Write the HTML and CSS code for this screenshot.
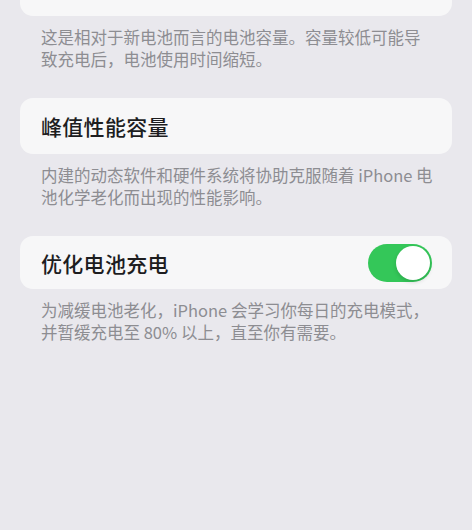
FILE: index.html
```html
<!DOCTYPE html>
<html lang="zh-CN">
<head>
<meta charset="utf-8">
<title>电池健康</title>
<link rel="stylesheet" href="styles.css">
</head>
<body>
<main class="settings">
  <section class="group group-first">
    <div class="cell">
      <span class="cell-title">最大容量</span>
      <span class="cell-value">100%</span>
    </div>
    <p class="footnote">这是相对于新电池而言的电池容量。容量较低可能导致充电后，电池使用时间缩短。</p>
  </section>

  <section class="group">
    <div class="cell">
      <span class="cell-title">峰值性能容量</span>
    </div>
    <p class="footnote">内建的动态软件和硬件系统将协助克服随着 iPhone 电池化学老化而出现的性能影响。</p>
  </section>

  <section class="group">
    <div class="cell cell-compact">
      <span class="cell-title">优化电池充电</span>
      <span class="switch switch-on" role="switch" aria-checked="true"><span class="knob"></span></span>
    </div>
    <p class="footnote">为减缓电池老化，iPhone 会学习你每日的充电模式，并暂缓充电至 80% 以上，直至你有需要。</p>
  </section>
</main>
</body>
</html>
```

FILE: styles.css
```css
html, body {
  margin: 0;
  padding: 0;
  background: #e9e8ed;
  height: 100%;
  overflow: hidden;
}

body {
  font-family: "Noto Sans CJK SC", "Noto Sans", sans-serif;
  -webkit-font-smoothing: antialiased;
}

.settings {
  display: flex;
  flex-direction: column;
  gap: 28px;
  padding: 0 20px;
}

/* the list is scrolled, so the first row sits partly above the top edge */
.group-first {
  margin-top: -40px;
}

.cell {
  height: 56px;
  box-sizing: border-box;
  background: #f7f7f8;
  border-radius: 13px;
  padding: 0 20px 0 21px;
  display: flex;
  align-items: center;
  justify-content: space-between;
}

.cell-compact {
  height: 53px;
}

.cell-title {
  font-size: 21px;
  font-weight: 500;
  color: #1d1d1f;
  letter-spacing: 0.3px;
}

.cell-value {
  font-size: 19px;
  color: #8e8e93;
}

.footnote {
  margin: 10px 0 0;
  padding: 0 16px 0 21px;
  font-size: 16.5px;
  line-height: 22px;
  color: #8d8d92;
}

.switch {
  width: 64px;
  height: 38px;
  border-radius: 19px;
  background: #e5e5ea;
  display: flex;
  align-items: center;
  padding: 2px;
  box-sizing: border-box;
}

.switch-on {
  background: #34c759;
  justify-content: flex-end;
}

.knob {
  width: 34px;
  height: 34px;
  border-radius: 50%;
  background: #ffffff;
  box-shadow: 0 2px 4px rgba(0, 0, 0, 0.15);
}
```
